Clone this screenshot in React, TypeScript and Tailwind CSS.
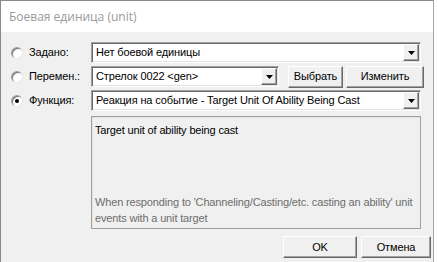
const ui = { fontFamily: '"Liberation Sans", Arial, sans-serif' };

function Arrow() {
  return (
    <div className="flex h-full w-[16px] items-center justify-center border border-t-white border-l-white border-b-[#696969] border-r-[#696969] bg-[#f0f0f0] shadow-[inset_-1px_-1px_0_#a0a0a0]">
      <svg width="7" height="4" viewBox="0 0 7 4">
        <path d="M0 0H7L3.5 4Z" fill="#000" />
      </svg>
    </div>
  );
}

function Combo({ text, className }: { text: string; className: string }) {
  return (
    <div
      className={`flex h-[21px] items-stretch border border-t-[#a0a0a0] border-l-[#a0a0a0] border-b-white border-r-white bg-white p-[1px] shadow-[inset_1px_1px_0_#696969,inset_-1px_-1px_0_#e3e3e3] ${className}`}
    >
      <div className="flex flex-1 items-center overflow-hidden whitespace-nowrap pl-[3px] text-[11px] tracking-[-0.12px] text-black">
        {text}
      </div>
      <Arrow />
    </div>
  );
}

function Button({ label, className }: { label: string; className: string }) {
  return (
    <div
      className={`flex h-[22px] items-center justify-center border border-t-white border-l-white border-b-[#696969] border-r-[#696969] bg-[#f0f0f0] text-[11px] tracking-[-0.12px] text-black shadow-[inset_-1px_-1px_0_#a0a0a0] ${className}`}
    >
      {label}
    </div>
  );
}

function Radio({ checked }: { checked?: boolean }) {
  return (
    <div className="flex h-[12px] w-[12px] items-center justify-center rounded-full border border-t-[#a0a0a0] border-l-[#a0a0a0] border-b-[#e8e8e8] border-r-[#e8e8e8] bg-white shadow-[inset_1px_1px_0_#707070]">
      {checked && <div className="h-[4px] w-[4px] rounded-full bg-black" />}
    </div>
  );
}

function Row({ label, checked, children }: { label: string; checked?: boolean; children: React.ReactNode }) {
  return (
    <div className="flex h-[21px] items-center">
      <div className="flex w-[90px] items-center">
        <div className="ml-[10px]">
          <Radio checked={checked} />
        </div>
        <span className="ml-[6px] text-[11px] tracking-[-0.12px] text-black">{label}</span>
      </div>
      {children}
    </div>
  );
}

export default function App() {
  return (
    <div className="flex h-[262px] w-[437px] bg-white" style={ui}>
      <div className="flex w-[434px] flex-col border-l border-r border-t border-l-[#8a8a8a] border-r-[#a8a8a8] border-t-[#8a8a8a] bg-[#f0f0f0]">
        <div
          className="flex h-[31px] items-center bg-white pl-[8px] text-[12px] text-[#9a9a9a]"
          style={{ fontFamily: '"Open Sans", "Noto Sans", sans-serif' }}
        >
          Боевая единица (unit)
        </div>
        <div className="flex flex-col gap-[3px] pt-[10px]">
          <Row label="Задано:">
            <Combo text="Нет боевой единицы" className="w-[330px]" />
          </Row>
          <Row label="Перемен.:">
            <Combo text="Стрелок 0022 <gen>" className="w-[188px]" />
            <Button label="Выбрать" className="ml-[9px] w-[55px]" />
            <Button label="Изменить" className="ml-[3px] w-[78px]" />
          </Row>
          <Row label="Функция:" checked>
            <Combo text="Реакция на событие - Target Unit Of Ability Being Cast" className="w-[330px]" />
          </Row>
        </div>
        <div className="ml-[90px] mt-[5px] flex h-[113px] w-[330px] flex-col justify-between border border-[#a0a0a0] px-[3px] pt-[5px] pb-[2px] text-[11px] tracking-[-0.15px] shadow-[inset_1px_1px_0_#e3e3e3]">
          <div className="text-black">Target unit of ability being cast</div>
          <div className="leading-[16px] text-[#6d6d6d]">
            When responding to 'Channeling/Casting/etc. casting an ability' unit events with a unit target
          </div>
        </div>
        <div className="mt-[7px] flex justify-end gap-[4px] pr-[2px]">
          <Button label="OK" className="w-[74px]" />
          <Button label="Отмена" className="w-[70px]" />
        </div>
      </div>
      <div className="flex-1 bg-white" />
    </div>
  );
}
